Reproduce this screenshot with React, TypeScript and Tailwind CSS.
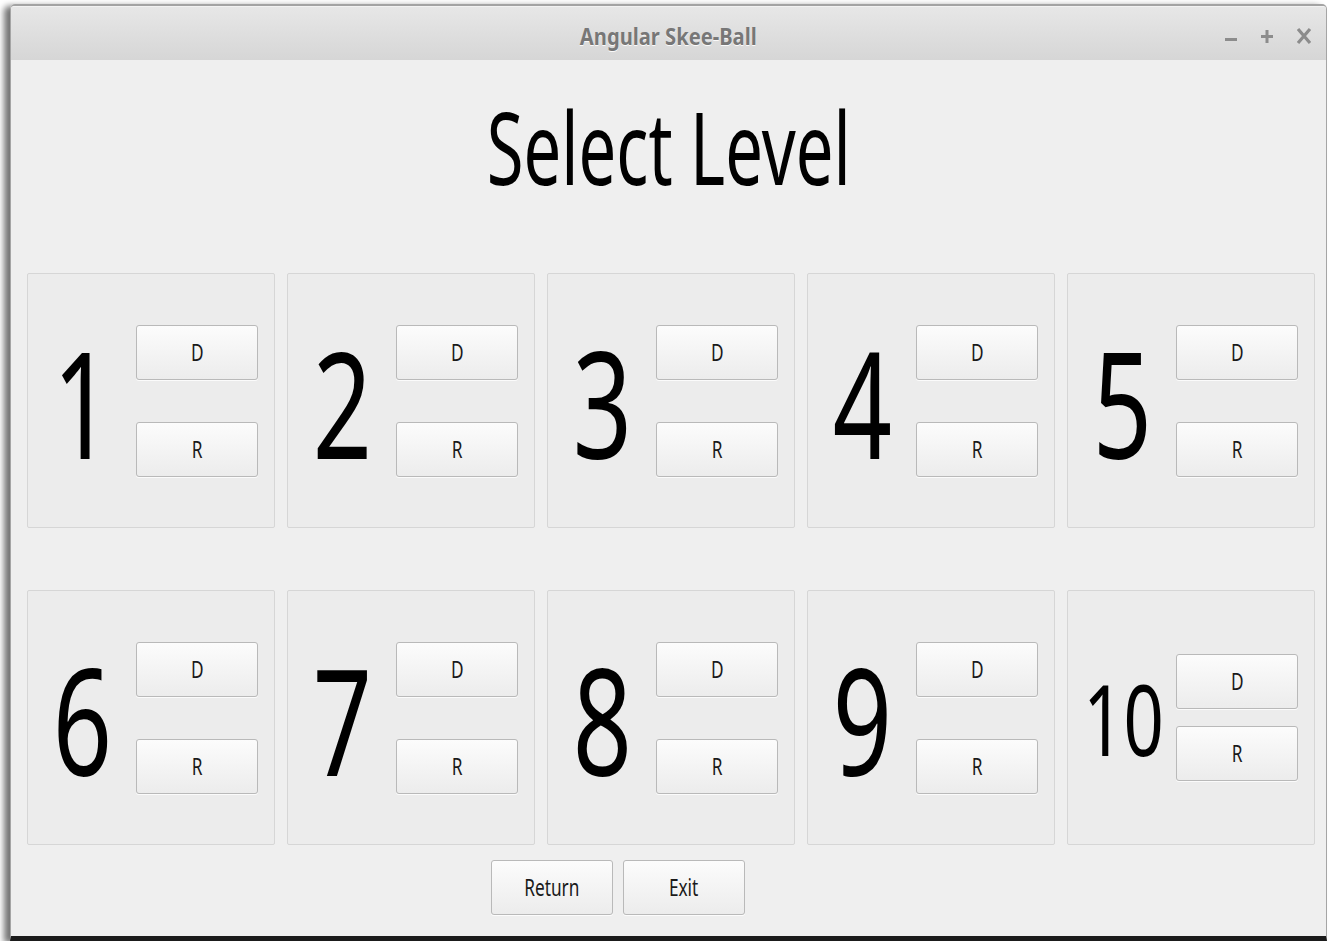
import React from "react";

const levels = [1, 2, 3, 4, 5, 6, 7, 8, 9, 10];

function QtButton({ label, className = "" }: { label: string; className?: string }) {
  return (
    <button
      className={
        "flex items-center justify-center rounded-[3px] border border-[#b9b9b9] bg-gradient-to-b from-[#fcfcfc] to-[#ececec] shadow-[0_1px_0_rgba(255,255,255,0.8)] text-[#1a1a1a] " +
        className
      }
    >
      <span className="inline-block scale-x-[0.75] text-[23px] leading-none">{label}</span>
    </button>
  );
}

function LevelCard({ n }: { n: number }) {
  const big = n < 10;
  return (
    <div className="flex h-[255px] w-[248px] items-center rounded-[2px] border border-[#d6d6d6] bg-[#ececec]">
      <div className="flex w-[108px] justify-center">
        {big ? (
          <span className="inline-block scale-x-[0.7] pt-[2px] text-[148px] leading-none text-black">{n}</span>
        ) : (
          <span className="inline-block scale-x-[0.72] pl-[4px] text-[98px] leading-none text-black">{n}</span>
        )}
      </div>
      <div className={"flex w-[122px] flex-col " + (big ? "gap-[42px]" : "gap-[17px]")}>
        <QtButton label="D" className="h-[55px] w-[122px]" />
        <QtButton label="R" className="h-[55px] w-[122px]" />
      </div>
    </div>
  );
}

export default function App() {
  return (
    <div className="h-[941px] w-[1330px] overflow-hidden bg-white pl-[10px] pr-[3px] pt-[4px] font-['Noto_Sans','Open_Sans',sans-serif]">
      {/* window frame */}
      <div className="flex h-full flex-col overflow-hidden rounded-t-[5px] border-x border-t-2 border-b-[5px] border-x-[#a5a5a5] border-t-[#a3a3a3] border-b-[#1b1b1b] shadow-[-6px_2px_6px_rgba(0,0,0,0.55)]">
        {/* title bar */}
        <div className="relative flex h-[54px] items-center justify-center border-t border-t-[#f2f2f2] bg-gradient-to-b from-[#e7e7e7] to-[#d6d6d6] pt-[4px]">
          <span className="inline-block scale-x-[0.84] text-[24px] font-bold leading-none text-[#777777] [text-shadow:0_1px_0_rgba(255,255,255,0.9)]">
            Angular Skee-Ball
          </span>
          <div className="absolute right-[14px] top-[20px] flex items-center gap-[22px] text-[#8c8c8c]">
            <svg width="14" height="18" viewBox="0 0 14 18">
              <rect x="1" y="11" width="12" height="3" fill="currentColor" />
            </svg>
            <svg width="14" height="18" viewBox="0 0 14 18">
              <rect x="1" y="8" width="12" height="3" fill="currentColor" />
              <rect x="5.5" y="3" width="3" height="13" fill="currentColor" />
            </svg>
            <svg width="16" height="18" viewBox="0 0 16 18">
              <path d="M2 2 L14 16 M14 2 L2 16" stroke="currentColor" strokeWidth="3.2" />
            </svg>
          </div>
        </div>

        {/* content */}
        <div className="flex flex-1 flex-col bg-[#efefef]">
          <div className="flex h-[213px] items-center justify-center pb-[42px]">
            <span className="inline-block scale-x-[0.67] text-[100px] leading-none text-black">Select Level</span>
          </div>

          <div className="ml-[16px] grid grid-cols-[repeat(5,248px)] gap-x-[12px] gap-y-[62px]">
            {levels.map((n) => (
              <LevelCard key={n} n={n} />
            ))}
          </div>

          <div className="ml-[480px] mt-[15px] flex gap-[10px]">
            <QtButton label="Return" className="h-[55px] w-[122px]" />
            <QtButton label="Exit" className="h-[55px] w-[122px]" />
          </div>
        </div>
      </div>
    </div>
  );
}
